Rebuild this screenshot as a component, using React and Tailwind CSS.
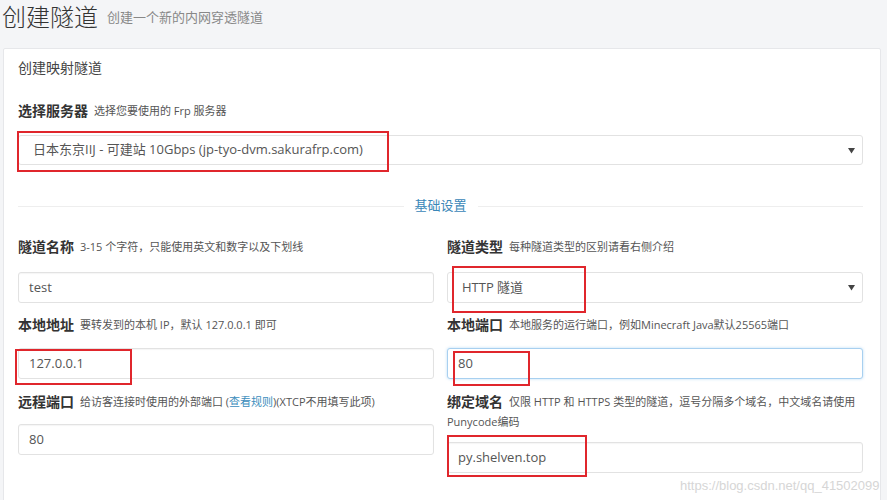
import React from "react";

const F = { fontFamily: '"Open Sans", "Noto Sans CJK SC", sans-serif' };

function RedBox({ className }) {
  return <div className={`pointer-events-none absolute border-2 border-[#e0262c] ${className}`} />;
}

function T({ children }) {
  return <span className="text-[14px] font-bold mr-[6px] leading-[20px] align-top">{children}</span>;
}

function H({ children }) {
  return <span className="text-[11px] text-[#555] leading-[20px] align-top">{children}</span>;
}

function Label({ title, hint }) {
  return (
    <div className="text-[#333] text-[11px] leading-[20px]">
      <T>{title}</T>
      <H>{hint}</H>
    </div>
  );
}

function Input({ value, focused, children }) {
  return (
    <div
      className={`relative h-[31px] rounded-[3px] border bg-white flex items-center pl-[10px] text-[13px] text-[#555] ${
        focused
          ? "border-[#a8d0f0] shadow-[0_0_3px_rgba(102,175,233,0.45)]"
          : "border-[#e2e2e2] shadow-[inset_0_1px_1px_rgba(0,0,0,0.04)]"
      }`}
    >
      {value}
      {children}
    </div>
  );
}

function Caret() {
  return (
    <svg className="absolute right-[7px] top-[12px]" width="7" height="6" viewBox="0 0 7 6">
      <path d="M0 0 L7 0 L3.5 5.5 Z" fill="#444" />
    </svg>
  );
}

export default function App() {
  return (
    <div className="relative w-[887px] h-[500px] overflow-hidden bg-[#f4f5f7]" style={F}>
      <div className="h-[48px] flex items-start pl-[2px] pt-[1px]">
        <span className="text-[24px] leading-[32px] text-[#333] font-light">创建隧道</span>
        <span className="ml-[9px] mt-[5px] text-[13px] leading-[22px] text-[#888]">创建一个新的内网穿透隧道</span>
      </div>
      <div className="ml-[3px] w-[878px] bg-white border border-[#e6e7ea] rounded-[2px] pl-[14px] pr-[17px]">
        <div className="h-[36px] flex items-center text-[14px] text-[#444]">创建映射隧道</div>
        <div className="mt-[16px]">
          <Label title="选择服务器" hint="选择您要使用的 Frp 服务器" />
        </div>
        <div className="relative mt-[14px]">
          <div className="relative h-[30px] rounded-[3px] border border-[#e2e2e2] bg-white flex items-center pl-[14px] text-[13px] text-[#555]">
            日本东京IIJ - 可建站 10Gbps (jp-tyo-dvm.sakurafrp.com)
            <Caret />
          </div>
          <RedBox className="left-[-1px] top-[-4px] w-[372px] h-[41px]" />
        </div>
        <div className="mt-[31px] h-[20px] flex items-center">
          <div className="flex-1 h-px bg-[#eeeeee]" />
          <span className="px-[11px] text-[13px] text-[#3a87b8]">基础设置</span>
          <div className="flex-1 h-px bg-[#eeeeee]" />
        </div>
        <div className="mt-[21px] grid grid-cols-2 gap-x-[13px] pb-[40px]">
          <div className="flex flex-col">
            <div className="mb-[15px]"><Label title="隧道名称" hint="3-15 个字符，只能使用英文和数字以及下划线" /></div>
            <Input value="test" />
            <div className="mt-[12px] mb-[13px]"><Label title="本地地址" hint="要转发到的本机 IP，默认 127.0.0.1 即可" /></div>
            <Input value="127.0.0.1">
              <RedBox className="left-[-4px] top-[0px] w-[117px] h-[36px]" />
            </Input>
            <div className="mt-[13px] mb-[12px]">
              <div className="text-[#333] text-[11px] leading-[20px]">
                <T>远程端口</T>
                <H>
                  给访客连接时使用的外部端口 (<span className="text-[#3c8dbc]">查看规则</span>)(XTCP不用填写此项)
                </H>
              </div>
            </div>
            <Input value="80" />
          </div>
          <div className="flex flex-col">
            <div className="mb-[15px]"><Label title="隧道类型" hint="每种隧道类型的区别请看右侧介绍" /></div>
            <div className="relative h-[31px] rounded-[3px] border border-[#e2e2e2] bg-white flex items-center pl-[14px] text-[13px] text-[#555]">
              HTTP 隧道
              <Caret />
              <RedBox className="left-[4px] top-[-7px] w-[134px] h-[47px]" />
            </div>
            <div className="mt-[12px] mb-[13px]"><Label title="本地端口" hint="本地服务的运行端口，例如Minecraft Java默认25565端口" /></div>
            <Input value="80" focused>
              <RedBox className="left-[5px] top-[2px] w-[77px] h-[35px]" />
            </Input>
            <div className="mt-[13px] mb-[10px]">
              <div className="text-[#333] text-[11px] leading-[20px]">
                <T>绑定域名</T>
                <H>仅限 HTTP 和 HTTPS 类型的隧道，逗号分隔多个域名，中文域名请使用</H>
                <br />
                <H>Punycode编码</H>
              </div>
            </div>
            <Input value="py.shelven.top">
              <RedBox className="left-[-1px] top-[-8px] w-[140px] h-[42px]" />
            </Input>
          </div>
        </div>
      </div>
      <div
        className="absolute left-[680px] top-[478px] text-[13px] leading-[16px] text-[#d6d6d6] whitespace-nowrap"
        style={{ fontFamily: '"Liberation Sans", sans-serif' }}
      >
        https://blog.csdn.net/qq_41502099
      </div>
    </div>
  );
}
